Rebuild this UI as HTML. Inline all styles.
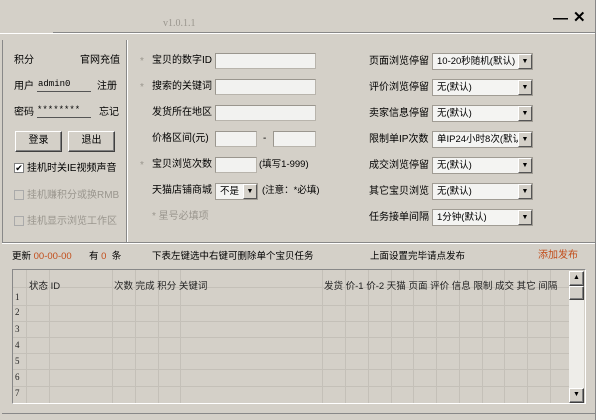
<!DOCTYPE html><html><head><meta charset="utf-8"><style>
*{margin:0;padding:0;box-sizing:border-box}
body{width:600px;height:420px;background:#d4d0c8;font-family:"Liberation Sans","WenQuanYi Zen Hei","Noto Sans CJK SC",sans-serif;font-size:10px;color:#000;position:relative;overflow:hidden}
.a{position:absolute;white-space:nowrap;line-height:13px}
.in{position:absolute;background:#f2f2f0;border:1px solid #b8b4ac;border-top-color:#9a968e;border-left-color:#9a968e}
.sel{position:absolute;background:#f4f4f2;border:1px solid #a09c94;height:17px;font-size:9.5px;line-height:15px;padding-left:4px;white-space:nowrap;overflow:hidden}
.sel b{position:absolute;right:0;top:0;width:14px;height:15px;background:#d4d0c8;border:1px solid;border-color:#fff #555 #555 #fff;font-size:7px;text-align:center;line-height:14px;font-weight:normal}
.btn{position:absolute;background:#d4d0c8;border:1px solid;border-color:#fff #404040 #404040 #fff;box-shadow:inset -1px -1px 0 #808080;text-align:center;line-height:18px}
.cb{position:absolute;width:10px;height:10px;border:1px solid #808080;background:#fff;font-size:9px;line-height:8px;text-align:center}
.g{color:#9a968e}
.o{color:#c24d1a}
.ln{position:absolute}
</style></head><body>
<div class="ln" style="left:53px;top:32px;width:543px;height:1px;background:#888"></div>
<div class="ln" style="left:0;top:33px;width:596px;height:1px;background:#fff"></div>
<div class="ln" style="left:595px;top:0;width:1px;height:420px;background:#888"></div>
<div class="ln" style="left:596px;top:0;width:4px;height:420px;background:#fff"></div>
<div class="a g" style="left:163px;top:17px;font-size:10px;font-family:'Liberation Serif',serif">v1.0.1.1</div>
<div class="a" style="left:553px;top:12px;font-size:15px;font-weight:bold">—</div>
<div class="a" style="left:573px;top:11px;font-size:15px;font-weight:bold">✕</div>
<div class="ln" style="left:2px;top:40px;width:1px;height:202px;background:#888"></div>
<div class="ln" style="left:126px;top:40px;width:1px;height:202px;background:#888"></div>
<div class="ln" style="left:127px;top:40px;width:1px;height:202px;background:#fff"></div>
<div class="ln" style="left:2px;top:242px;width:593px;height:1px;background:#888"></div>
<div class="ln" style="left:2px;top:243px;width:593px;height:1px;background:#fff"></div>
<div class="ln" style="left:2px;top:413px;width:593px;height:1px;background:#888"></div>
<div class="a" style="left:14px;top:54px">积分</div>
<div class="a" style="left:80px;top:54px">官网充值</div>
<div class="a" style="left:14px;top:80px">用户</div>
<div class="a" style="left:38px;top:78px;font-size:9px;font-family:'Liberation Mono',monospace">admin0</div>
<div class="ln" style="left:37px;top:91px;width:54px;height:1px;background:#555"></div>
<div class="a" style="left:97px;top:80px">注册</div>
<div class="a" style="left:14px;top:106px">密码</div>
<div class="a" style="left:37px;top:104px;font-size:9px;font-family:'Liberation Mono',monospace">********</div>
<div class="ln" style="left:37px;top:117px;width:54px;height:1px;background:#555"></div>
<div class="a" style="left:99px;top:106px">忘记</div>
<div class="btn" style="left:15px;top:131px;width:47px;height:21px">登录</div>
<div class="btn" style="left:68px;top:131px;width:47px;height:21px">退出</div>
<div class="cb" style="left:14px;top:163px">✔</div>
<div class="a" style="left:27px;top:162px">挂机时关IE视频声音</div>
<div class="cb" style="left:14px;top:190px;background:#d4d0c8;border-color:#aaa"></div>
<div class="a g" style="left:27px;top:189px">挂机赚积分或换RMB</div>
<div class="cb" style="left:14px;top:216px;background:#d4d0c8;border-color:#aaa"></div>
<div class="a g" style="left:27px;top:215px">挂机显示浏览工作区</div>
<div class="a g" style="left:140px;top:55px">*</div>
<div class="a" style="left:152px;top:54px">宝贝的数字ID</div>
<div class="in" style="left:215px;top:53px;width:101px;height:16px"></div>
<div class="a g" style="left:140px;top:81px">*</div>
<div class="a" style="left:152px;top:80px">搜索的关键词</div>
<div class="in" style="left:215px;top:79px;width:101px;height:16px"></div>
<div class="a" style="left:152px;top:106px">发货所在地区</div>
<div class="in" style="left:215px;top:105px;width:101px;height:16px"></div>
<div class="a" style="left:152px;top:132px">价格区间(元)</div>
<div class="in" style="left:215px;top:131px;width:42px;height:16px"></div>
<div class="a" style="left:263px;top:132px">-</div>
<div class="in" style="left:273px;top:131px;width:43px;height:16px"></div>
<div class="a g" style="left:140px;top:159px">*</div>
<div class="a" style="left:152px;top:158px">宝贝浏览次数</div>
<div class="in" style="left:215px;top:157px;width:42px;height:16px"></div>
<div class="a" style="left:259px;top:158px;font-size:9.5px">(填写1-999)</div>
<div class="a" style="left:152px;top:184px">天猫店铺商城</div>
<div class="sel" style="left:215px;top:183px;width:43px">不是<b>▼</b></div>
<div class="a" style="left:262px;top:184px;font-size:9.5px">(注意：*必填)</div>
<div class="a g" style="left:152px;top:210px">* 星号必填项</div>
<div class="a" style="left:369px;top:55px">页面浏览停留</div>
<div class="sel" style="left:432px;top:53px;width:101px">10-20秒随机(默认)<b>▼</b></div>
<div class="a" style="left:369px;top:81px">评价浏览停留</div>
<div class="sel" style="left:432px;top:79px;width:101px">无(默认)<b>▼</b></div>
<div class="a" style="left:369px;top:107px">卖家信息停留</div>
<div class="sel" style="left:432px;top:105px;width:101px">无(默认)<b>▼</b></div>
<div class="a" style="left:369px;top:133px">限制单IP次数</div>
<div class="sel" style="left:432px;top:131px;width:101px">单IP24小时8次(默认)<b>▼</b></div>
<div class="a" style="left:369px;top:159px">成交浏览停留</div>
<div class="sel" style="left:432px;top:157px;width:101px">无(默认)<b>▼</b></div>
<div class="a" style="left:369px;top:185px">其它宝贝浏览</div>
<div class="sel" style="left:432px;top:183px;width:101px">无(默认)<b>▼</b></div>
<div class="a" style="left:369px;top:211px">任务接单间隔</div>
<div class="sel" style="left:432px;top:209px;width:101px">1分钟(默认)<b>▼</b></div>
<div class="a" style="left:12px;top:250px;font-size:9.5px">更新 <span class="o">00-00-00</span></div>
<div class="a" style="left:89px;top:250px;font-size:9.5px">有 <span class="o">0</span> &nbsp;条</div>
<div class="a" style="left:152px;top:250px;font-size:9.5px">下表左键选中右键可删除单个宝贝任务</div>
<div class="a" style="left:370px;top:250px;font-size:9.5px">上面设置完毕请点发布</div>
<div class="a o" style="left:538px;top:249px">添加发布</div>
<div class="ln" style="left:12px;top:269px;width:574px;height:135px;border:1px solid;border-color:#888 #fff #fff #888"></div>
<svg class="ln" style="left:13px;top:270px" width="556" height="133">
<g stroke="#c4c0b8" stroke-width="1">
<line x1="0" y1="17.5" x2="556" y2="17.5"/><line x1="0" y1="35.5" x2="556" y2="35.5"/><line x1="0" y1="51.5" x2="556" y2="51.5"/><line x1="0" y1="67.5" x2="556" y2="67.5"/><line x1="0" y1="83.5" x2="556" y2="83.5"/><line x1="0" y1="99.5" x2="556" y2="99.5"/><line x1="0" y1="116.5" x2="556" y2="116.5"/>
<line x1="13.5" y1="0" x2="13.5" y2="133"/><line x1="36.5" y1="0" x2="36.5" y2="133"/><line x1="99.5" y1="0" x2="99.5" y2="133"/><line x1="122.5" y1="0" x2="122.5" y2="133"/><line x1="145.5" y1="0" x2="145.5" y2="133"/><line x1="167.5" y1="0" x2="167.5" y2="133"/><line x1="309.5" y1="0" x2="309.5" y2="133"/><line x1="332.5" y1="0" x2="332.5" y2="133"/><line x1="355.5" y1="0" x2="355.5" y2="133"/><line x1="378.5" y1="0" x2="378.5" y2="133"/><line x1="400.5" y1="0" x2="400.5" y2="133"/><line x1="423.5" y1="0" x2="423.5" y2="133"/><line x1="446.5" y1="0" x2="446.5" y2="133"/><line x1="469.5" y1="0" x2="469.5" y2="133"/><line x1="491.5" y1="0" x2="491.5" y2="133"/><line x1="514.5" y1="0" x2="514.5" y2="133"/><line x1="537.5" y1="0" x2="537.5" y2="133"/>
</g>
<g font-size="9.5" font-family="Liberation Sans,WenQuanYi Zen Hei,sans-serif" fill="#222">
<text x="16" y="19">状态 ID</text><text x="101" y="19">次数 完成 积分 关键词</text>
<text x="311" y="19">发货 价-1 价-2 天猫 页面 评价 信息 限制 成交 其它 间隔</text>
<g font-family="Liberation Serif,serif" font-size="9"><text x="2" y="30">1</text><text x="2" y="45">2</text><text x="2" y="62">3</text><text x="2" y="78">4</text><text x="2" y="94">5</text><text x="2" y="110">6</text><text x="2" y="126">7</text></g>
</g></svg>
<div class="ln" style="left:569px;top:271px;width:15px;height:132px;background:#eeede9"></div>
<div class="btn" style="left:569px;top:271px;width:15px;height:15px;font-size:7px;line-height:12px">▲</div>
<div class="btn" style="left:569px;top:286px;width:15px;height:14px"></div>
<div class="btn" style="left:569px;top:388px;width:15px;height:15px;font-size:7px;line-height:12px">▼</div>
</body></html>
